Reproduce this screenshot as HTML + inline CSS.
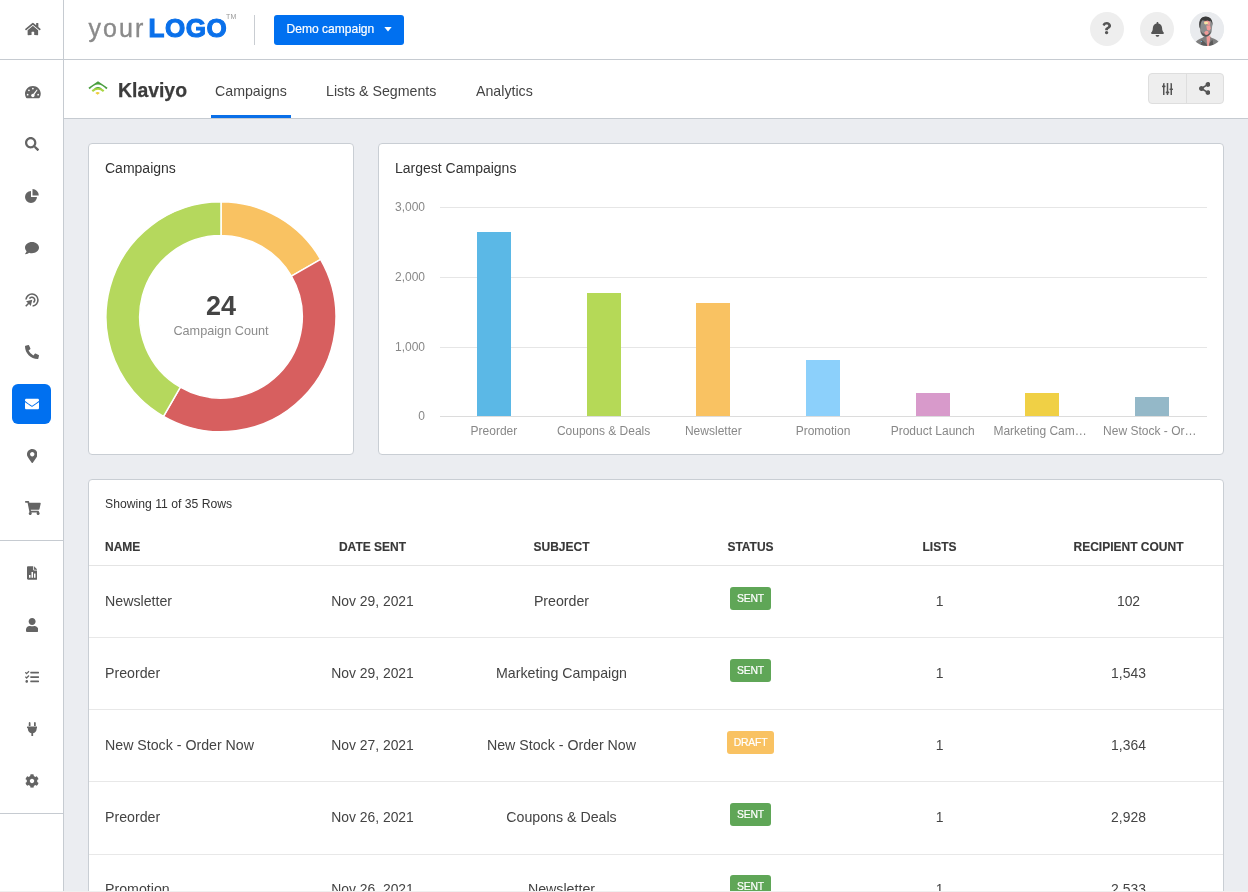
<!DOCTYPE html>
<html>
<head>
<meta charset="utf-8">
<title>Klaviyo Campaigns</title>
<style>
*{box-sizing:border-box;margin:0;padding:0}
html,body{width:1248px;height:892px;overflow:hidden}
body{font-family:"Liberation Sans",sans-serif;background:#ebedf1;color:#444;position:relative}
.abs{position:absolute}
/* sidebar */
#side{position:absolute;left:0;top:0;width:64px;height:892px;background:#fff;border-right:1px solid #c6cbd1}
#side .ic{position:absolute;left:0;width:63px;height:20px;display:flex;align-items:center;justify-content:center}
#side svg{fill:#555;display:block}
#side .hr{position:absolute;left:0;width:63px;height:1px;background:#c6cbd1}
#side .act{position:absolute;left:12px;top:384px;width:39px;height:40px;border-radius:6px;background:#0070f0}
/* top bar */
#top{position:absolute;left:64px;top:0;width:1184px;height:60px;background:#fff;border-bottom:1px solid #c6cbd1}
#sub{position:absolute;left:64px;top:60px;width:1184px;height:59px;background:#fff;border-bottom:1px solid #c6cbd1}
.card{position:absolute;background:#fff;border:1px solid #c9ced4;border-radius:4px}
.ttl{position:absolute;left:16px;top:16.200px;font-size:14px;color:#333;line-height:17px}

#c3 .show{position:absolute;left:16px;top:17px;font-size:12.200px;line-height:14px;color:#333}
#c3 .row{position:absolute;left:0;width:1134px;display:flex;align-items:center}
#c3 .row>div{width:189px;text-align:center;white-space:nowrap}
#c3 .row>div:first-child{text-align:left;padding-left:16px}
#c3 .hd{top:48px;height:38px;border-bottom:1px solid #e4e4e4;font-size:12px;font-weight:bold;color:#383838;-webkit-text-stroke:.15px #383838}
#c3 .r{height:72px;border-bottom:1px solid #e8e8e8;font-size:14.200px;color:#444;padding-bottom:1px}
#c3 .r>div:nth-child(2),#c3 .r>div:nth-child(5),#c3 .r>div:nth-child(6){font-size:13.900px}
.bdg{display:inline-block;height:23px;line-height:23.500px;width:41px;border-radius:3px;font-size:10.400px;letter-spacing:-.2px;color:#fff;position:relative;top:-2.500px;vertical-align:middle;-webkit-text-stroke:.2px #fff;text-align:center}
.draft{width:47px}
.sent{background:#5fa657}
.draft{background:#f9c262}
</style>
</head>
<body>
<div id="wrap" style="position:absolute;left:0;top:0;width:1248px;height:892px;will-change:transform">
<!--SIDEBAR-->
<div id="side">
<svg class="abs" style="left:25.00px;top:21.60px;fill:#646464" width="15.75" height="14" viewBox="0 0 576 512"><path d="M280.37 148.26L96 300.11V464a16 16 0 0 0 16 16l112.06-.29a16 16 0 0 0 15.92-16V368a16 16 0 0 1 16-16h64a16 16 0 0 1 16 16v95.640a16 16 0 0 0 16 16.050L464 480a16 16 0 0 0 16-16V300L295.67 148.26a12.190 12.190 0 0 0-15.300 0zM571.600 251.470L488 182.560V44.050a12 12 0 0 0-12-12h-56a12 12 0 0 0-12 12v72.610L318.470 43a48 48 0 0 0-61 0L4.340 251.470a12 12 0 0 0-1.600 16.900l25.500 31A12 12 0 0 0 45.150 301l235.220-193.740a12.190 12.190 0 0 1 15.300 0L530.900 301a12 12 0 0 0 16.900-1.600l25.500-31a12 12 0 0 0-1.700-16.930z"/></svg>
<div class="hr" style="top:59px"></div>
<svg class="abs" style="left:25.00px;top:84.60px;fill:#646464" width="15.75" height="14" viewBox="0 0 576 512"><path d="M288 32C128.940 32 0 160.940 0 320c0 52.800 14.250 102.260 39.060 144.800 5.610 9.620 16.300 15.200 27.440 15.200h443c11.140 0 21.830-5.580 27.440-15.200C561.750 422.260 576 372.800 576 320c0-159.060-128.940-288-288-288z"/><g fill="#fff"><circle cx="288" cy="128" r="32"/><circle cx="144" cy="192" r="32"/><circle cx="96" cy="352" r="32"/><circle cx="480" cy="352" r="32"/><circle cx="288" cy="384" r="62"/><path d="M268 366L426 172a18 18 0 0 1 28 21L310 400z"/></g></svg>
<svg class="abs" style="left:25.00px;top:136.60px;fill:#646464" width="14.00" height="14" viewBox="0 0 512 512"><path d="M505 442.700L405.300 343c-4.500-4.500-10.600-7-17-7H372c27.600-35.300 44-79.700 44-128C416 93.100 322.900 0 208 0S0 93.100 0 208s93.100 208 208 208c48.300 0 92.700-16.400 128-44v16.300c0 6.400 2.500 12.500 7 17l99.700 99.700c9.400 9.400 24.600 9.400 33.900 0l28.300-28.300c9.400-9.400 9.400-24.600.1-34zM208 336c-70.700 0-128-57.200-128-128 0-70.700 57.200-128 128-128 70.700 0 128 57.200 128 128 0 70.700-57.200 128-128 128z"/></svg>
<svg class="abs" style="left:25.00px;top:188.60px;fill:#646464" width="14.00" height="14" viewBox="0 0 512 512"><path d="M219 73A219 219 0 1 0 438 292L219 292z"/><path d="M274 4A230 230 0 0 1 504 234L274 234z"/></svg>
<svg class="abs" style="left:25.00px;top:240.60px;fill:#646464" width="14.00" height="14" viewBox="0 0 512 512"><path d="M256 32C114.600 32 0 125.100 0 240c0 49.600 21.400 95 57 130.700C44.500 421.100 2.700 466 2.200 466.500c-2.200 2.300-2.800 5.700-1.500 8.700S4.800 480 8 480c66.300 0 116-31.800 140.600-51.400 32.700 12.300 69 19.400 107.400 19.400 141.400 0 256-93.100 256-208S397.400 32 256 32z"/></svg>
<svg class="abs" style="left:25.22px;top:292.60px;fill:#646464" width="13.56" height="14" viewBox="0 0 13.56 14"><g fill="none" stroke="#646464" stroke-width="1.600"><path d="M1 6.500A6 6 0 1 1 7.600 13"/><path d="M4.500 5.700A2.800 2.800 0 1 1 8.400 9.450"/></g><path d="M7.300 6.800L1.100 8.300 2.900 10 0.200 12.700l1.100 1.100L4 11.100l1.800 1.800z"/></svg>
<svg class="abs" style="left:25.00px;top:344.60px;fill:#646464" width="14.00" height="14" viewBox="0 0 512 512"><path d="M497.390 361.800l-112-48a24 24 0 0 0-28 6.900l-49.600 60.600A370.660 370.660 0 0 1 130.600 204.110l60.600-49.600a23.940 23.940 0 0 0 6.900-28l-48-112A24.160 24.160 0 0 0 122.600.61l-104 24A24 24 0 0 0 0 48c0 256.500 207.900 464 464 464a24 24 0 0 0 23.400-18.600l24-104a24.290 24.290 0 0 0-14.010-27.600z"/></svg>
<div class="act"></div>
<svg class="abs" style="left:25.00px;top:396.60px;fill:#fff" width="14.00" height="14" viewBox="0 0 512 512"><path d="M502.300 190.800c3.900-3.100 9.700-.2 9.700 4.700V400c0 26.500-21.500 48-48 48H48c-26.500 0-48-21.500-48-48V195.600c0-5 5.700-7.800 9.700-4.700 22.400 17.400 52.100 39.500 154.100 113.600 21.100 15.400 56.700 47.800 92.200 47.600 35.700.3 72-32.800 92.300-47.600 102-74.100 131.600-96.300 154-113.700zM256 320c23.200.4 56.600-29.200 73.400-41.400 132.700-96.300 142.800-104.700 173.400-128.700 5.800-4.500 9.200-11.500 9.200-18.900v-19c0-26.500-21.500-48-48-48H48C21.500 64 0 85.500 0 112v19c0 7.400 3.400 14.300 9.200 18.900 30.600 23.900 40.700 32.400 173.400 128.700 16.800 12.200 50.200 41.800 73.400 41.400z"/></svg>
<svg class="abs" style="left:26.75px;top:448.60px;fill:#646464" width="10.50" height="14" viewBox="0 0 384 512"><path d="M172.268 501.670C26.970 291.031 0 269.413 0 192 0 85.961 85.961 0 192 0s192 85.961 192 192c0 77.413-26.970 99.031-172.268 309.670-9.535 13.774-29.930 13.773-39.464 0zM192 272c44.183 0 80-35.817 80-80s-35.817-80-80-80-80 35.817-80 80 35.817 80 80 80z"/></svg>
<svg class="abs" style="left:25.00px;top:500.60px;fill:#646464" width="15.75" height="14" viewBox="0 0 576 512"><path d="M528.120 301.319l47.273-208C578.806 78.301 567.391 64 551.990 64H159.208l-9.166-44.810C147.758 8.021 137.930 0 126.529 0H24C10.745 0 0 10.745 0 24v16c0 13.255 10.745 24 24 24h69.883l70.248 343.435C147.325 417.100 136 435.222 136 456c0 30.928 25.072 56 56 56s56-25.072 56-56c0-15.674-6.447-29.835-16.824-40h209.647C430.447 426.165 424 440.326 424 456c0 30.928 25.072 56 56 56s56-25.072 56-56c0-22.172-12.888-41.332-31.579-50.405l5.517-24.276c3.413-15.018-8.002-29.319-23.403-29.319H218.117l-6.545-32h293.145c11.206 0 20.920-7.754 23.403-18.681z"/></svg>
<div class="hr" style="top:540px"></div>
<svg class="abs" style="left:26.75px;top:565.60px;fill:#646464" width="10.50" height="14" viewBox="0 0 11 14"><path fill-rule="evenodd" d="M1.200 0h5.300v3.600c0 .5.400.9.900.9h3.600v8.300c0 .7-.5 1.200-1.200 1.200H1.200C.5 14 0 13.500 0 12.800V1.200C0 .5.500 0 1.200 0zM7.400 0l3.600 3.600H7.400zM2.100 9h1.600v3H2.100zM4.700 6h1.600v6H4.700zM7.300 7.600h1.600V12H7.300z"/></svg>
<svg class="abs" style="left:25.88px;top:617.60px;fill:#646464" width="12.25" height="14" viewBox="0 0 448 512"><path d="M224 256c70.700 0 128-57.300 128-128S294.700 0 224 0 96 57.300 96 128s57.300 128 128 128zm89.600 32h-16.700c-22.200 10.200-46.900 16-72.900 16s-50.600-5.800-72.900-16h-16.700C60.200 288 0 348.200 0 422.400V464c0 26.500 21.500 48 48 48h352c26.500 0 48-21.500 48-48v-41.600c0-74.200-60.200-134.400-134.400-134.400z"/></svg>
<svg class="abs" style="left:25.00px;top:669.60px;fill:#646464" width="14.00" height="14" viewBox="0 0 512 512"><path d="M139.610 35.500a12 12 0 0 0-17 0L58.930 98.810l-22.700-22.120a12 12 0 0 0-17 0L3.530 92.410a12 12 0 0 0 0 17l47.590 47.400a12.780 12.780 0 0 0 17.610 0l15.590-15.620L156.520 69a12.090 12.090 0 0 0 .09-17zm0 159.190a12 12 0 0 0-17 0l-63.680 63.720-22.700-22.100a12 12 0 0 0-17 0L3.530 252a12 12 0 0 0 0 17L51 316.500a12.770 12.770 0 0 0 17.600 0l15.700-15.690 72.200-72.220a12 12 0 0 0 .09-16.900zM64 368c-26.490 0-48.590 21.500-48.590 48S37.530 464 64 464a48 48 0 0 0 0-96zm432 16H208a16 16 0 0 0-16 16v32a16 16 0 0 0 16 16h288a16 16 0 0 0 16-16v-32a16 16 0 0 0-16-16zm0-320H208a16 16 0 0 0-16 16v32a16 16 0 0 0 16 16h288a16 16 0 0 0 16-16V80a16 16 0 0 0-16-16zm0 160H208a16 16 0 0 0-16 16v32a16 16 0 0 0 16 16h288a16 16 0 0 0 16-16v-32a16 16 0 0 0-16-16z"/></svg>
<svg class="abs" style="left:26.75px;top:721.60px;fill:#646464" width="10.50" height="14" viewBox="0 0 384 512"><path d="M256 144V32c0-17.673 14.327-32 32-32s32 14.327 32 32v112h-64zm112 16H16c-8.837 0-16 7.163-16 16v32c0 8.837 7.163 16 16 16h16v32c0 77.406 54.969 141.971 128 156.796V512h64v-99.204c73.031-14.825 128-79.390 128-156.796v-32h16c8.837 0 16-7.163 16-16v-32c0-8.837-7.163-16-16-16zm-240-16V32c0-17.673-14.327-32-32-32S64 14.327 64 32v112h64z"/></svg>
<svg class="abs" style="left:25.00px;top:773.60px;fill:#646464" width="14.00" height="14" viewBox="0 0 512 512"><path d="M487.400 315.700l-42.600-24.600c4.300-23.200 4.300-47 0-70.200l42.600-24.600c4.900-2.800 7.100-8.600 5.500-14-11.100-35.600-30-67.800-54.700-94.600-3.800-4.100-10-5.100-14.800-2.300L380.800 110c-17.900-15.400-38.500-27.300-60.800-35.100V25.800c0-5.600-3.900-10.500-9.400-11.700-36.700-8.200-74.300-7.800-109.200 0-5.500 1.200-9.400 6.100-9.400 11.700V75c-22.200 7.900-42.800 19.800-60.800 35.100L88.700 85.500c-4.900-2.800-11-1.900-14.800 2.300-24.700 26.700-43.600 58.900-54.700 94.600-1.700 5.400.6 11.200 5.500 14L67.300 221c-4.300 23.200-4.300 47 0 70.200l-42.600 24.600c-4.900 2.800-7.100 8.600-5.500 14 11.100 35.600 30 67.800 54.700 94.600 3.800 4.100 10 5.100 14.800 2.300l42.600-24.600c17.900 15.400 38.500 27.300 60.800 35.100v49.200c0 5.600 3.900 10.500 9.400 11.700 36.700 8.200 74.300 7.800 109.200 0 5.500-1.200 9.400-6.100 9.400-11.700v-49.200c22.200-7.900 42.800-19.800 60.800-35.100l42.600 24.600c4.900 2.800 11 1.900 14.800-2.300 24.700-26.700 43.600-58.900 54.700-94.600 1.500-5.500-.7-11.300-5.600-14.100zM256 336c-44.100 0-80-35.900-80-80s35.900-80 80-80 80 35.900 80 80-35.900 80-80 80z"/></svg>
<div class="hr" style="top:813px"></div>
</div>
<!--TOP-->
<div id="top">
<div class="abs" id="lg1" style="left:24.400px;top:12.900px;font-size:25px;line-height:30px;color:#8a8a8a;letter-spacing:2.100px;-webkit-text-stroke:.35px #8a8a8a;white-space:nowrap">your</div>
<div class="abs" id="lg2" style="left:84.500px;top:12.600px;font-size:26px;line-height:30px;font-weight:bold;color:#0a70ea;-webkit-text-stroke:1.1px #0a70ea;letter-spacing:.55px;white-space:nowrap">LOGO</div>
<div class="abs" id="tm" style="left:162px;top:13px;font-size:7px;line-height:8px;color:#999;letter-spacing:.3px">TM</div>
<div class="abs" style="left:190px;top:15px;width:1px;height:30px;background:#c9cdd2"></div>
<div class="abs" id="btn" style="left:210px;top:15px;width:130px;height:30px;border-radius:3px;background:#0070f0;color:#fff;font-size:12.050px;line-height:29.500px;padding-left:12.500px;-webkit-text-stroke:.2px #fff;white-space:nowrap">Demo campaign<svg class="abs" style="left:110.200px;top:12px" width="8" height="5" viewBox="0 0 8 5"><path d="M0.3 0h7.4L4 4.6z" fill="#fff"/></svg></div>
<div class="abs" style="left:1026px;top:12px;width:34px;height:34px;border-radius:17px;background:#eee"><svg class="abs" style="left:12.300px;top:10.300px" width="9.200" height="12.300" viewBox="0 0 384 512"><path fill="#555" d="M202.021 0C122.202 0 70.503 32.703 29.914 91.026c-7.363 10.580-5.093 25.086 5.178 32.874l43.138 32.709c10.373 7.865 25.132 6.026 33.253-4.148 25.049-31.381 43.630-49.449 82.757-49.449 30.764 0 68.816 19.799 68.816 49.631 0 22.552-18.617 34.134-48.993 51.164-35.423 19.860-82.299 44.576-82.299 106.405V320c0 13.255 10.745 24 24 24h72.471c13.255 0 24-10.745 24-24v-5.773c0-42.860 125.268-44.645 125.268-160.627C377.504 66.256 286.902 0 202.021 0zM192 373.459c-38.196 0-69.271 31.075-69.271 69.271 0 38.195 31.075 69.270 69.271 69.270s69.271-31.075 69.271-69.271-31.075-69.270-69.271-69.270z"/></svg></div>
<div class="abs" style="left:1076px;top:12px;width:34px;height:34px;border-radius:17px;background:#eee"><svg class="abs" style="left:10.850px;top:10.100px" width="12.950" height="14.800" viewBox="0 0 448 512"><path fill="#555" d="M224 512c35.320 0 63.970-28.650 63.970-64H160.030c0 35.350 28.650 64 63.970 64zm215.390-149.710c-19.320-20.760-55.470-51.990-55.470-154.290 0-77.700-54.480-139.900-127.940-155.160V32c0-17.670-14.320-32-31.980-32s-31.980 14.330-31.980 32v20.840C118.560 68.100 64.080 130.300 64.080 208c0 102.300-36.150 133.530-55.470 154.290-6 6.450-8.660 14.160-8.610 21.710.11 16.400 12.980 32 32.100 32h383.800c19.120 0 32-15.600 32.100-32 .05-7.550-2.610-15.270-8.610-21.710z"/></svg></div>
<div class="abs" id="av" style="left:1126px;top:12px;width:34px;height:34px;border-radius:17px;background:#e9ebee;overflow:hidden">
<svg width="34" height="34" viewBox="0 0 34 34"><defs><filter id="avb" x="-10%" y="-10%" width="120%" height="120%"><feGaussianBlur stdDeviation=".5"/></filter></defs><rect width="34" height="34" fill="#e9ebee"/><g filter="url(#avb)">
<path d="M3.500 34C4.500 29.500 8 27.500 12 26l3-2h4l3 2c4.500 1.500 8 3.500 9 8z" fill="#7e7e7e"/>
<path d="M11.500 27.500l4.500 4 1.500 2.500H11zM22.500 27.500l-3.500 4-1 2.500h5.500z" fill="#5a5a5a"/>
<path d="M16.400 23.500h4l-.3 4-1.300 6.500h-1.600l-.5-6z" fill="#ee9a97"/>
<path d="M9.700 13C9.200 7.500 11.600 4.700 15.700 4.700S22.600 7.500 22.300 13l-.6 6c-.5 3.200-2.900 5.700-6 5.700s-5-2.500-5.500-5.700z" fill="#8b8d8e"/>
<path d="M9.400 15C8.500 8 11.100 4.400 15.700 4.400S23.200 8 22.400 14c-.3-2.500-.7-4.300-1.800-5.300-1.800.5-5.500.5-8.200-.4-1.500 1.200-2 3.800-2.200 8.700z" fill="#3a3a3a"/>
<path d="M10.700 18.500c.5 3.600 2.300 6.200 5 6.200s4.800-2.300 5.500-5.900c-1 2.300-2.500 3.100-5.300 3.100s-4.200-.9-5.200-3.400z" fill="#575757"/>
<path d="M14.200 9.300l3.800-.7 2.300 2-.2 2.200-2 .3-1.800-1.300-2.200.2z" fill="#f09a98"/>
<path d="M16.300 13.500l3.800-.3.600 3.300-1.300 2.300-2.300-.8-.5-2.200z" fill="#f09a98"/>
<path d="M15.800 18.700l2.200.4.800 2.500-1.800 1.300-2.200-.5-.2-2.200z" fill="#f09a98"/>
<path d="M13.900 10.400l2.300-.9 2.200.9-.9 1.700-2.500.3z" fill="#f1e6a4"/>
<rect x="10.900" y="29" width="1" height="1" fill="#7cc4ee"/></g></svg></div>

</div>
<div id="sub">
<svg class="abs" id="klogo" style="left:24.400px;top:21.300px" width="20" height="14" viewBox="0 0 20 14"><path d="M10 0.300L19.600 6.800l-1.300 1.400Q10 -1.300 1.700 8.200L0.400 6.800z" fill="#4a9e3f"/><path d="M3.600 9.300Q10 3.900 16.400 9.300L15 10.900Q10 6.600 5 10.900z" fill="#a8d641"/><path d="M5.600 7.700Q10 4.500 14.400 7.700Q10 6.500 5.600 7.700z" fill="#4a9e3f"/><path d="M7.300 11.900Q9.600 10.100 11.900 11.900L9.600 13.700z" fill="#efcd3a"/></svg>
<div class="abs" id="kl" style="left:54px;top:17.400px;font-size:19.400px;line-height:26px;font-weight:bold;color:#3c3c3c;white-space:nowrap;-webkit-text-stroke:.25px #3c3c3c">Klaviyo</div>
<div class="abs tab" id="t1" style="left:151px;top:22px;font-size:14.200px;line-height:18px;color:#444;white-space:nowrap">Campaigns</div>
<div class="abs" style="left:147px;top:55px;width:80px;height:3px;background:#0a6fe8"></div>
<div class="abs tab" id="t2" style="left:262px;top:22px;font-size:14.200px;line-height:18px;color:#444;white-space:nowrap">Lists &amp; Segments</div>
<div class="abs tab" id="t3" style="left:412px;top:22px;font-size:14.200px;line-height:18px;color:#444;white-space:nowrap">Analytics</div>
<div class="abs" id="bg" style="left:1084px;top:13px;width:76px;height:31px;border-radius:4px;background:#eee;border:1px solid #dedede">
<div class="abs" style="left:37px;top:0;width:1px;height:29px;background:#dedede"></div>
<svg class="abs" style="left:12.700px;top:8.600px" width="11" height="12.400" viewBox="0 0 11 12.400"><g fill="#555"><rect x="1" y="0" width="1.500" height="12.400" rx=".5"/><rect x="4.750" y="0" width="1.500" height="12.400" rx=".5"/><rect x="8.500" y="0" width="1.500" height="12.400" rx=".5"/><rect x="0" y="2.500" width="3.500" height="1.700" rx=".6"/><rect x="3.750" y="8.600" width="3.500" height="1.700" rx=".6"/><rect x="7.500" y="5.400" width="3.500" height="1.700" rx=".6"/></g></svg>
<svg class="abs" style="left:50px;top:8px" width="11.400" height="13" viewBox="0 0 448 512"><path fill="#555" d="M352 320c-22.608 0-43.387 7.819-59.790 20.895l-102.486-64.054a96.551 96.551 0 0 0 0-41.683l102.486-64.054C308.613 184.181 329.392 192 352 192c53.019 0 96-42.981 96-96S405.019 0 352 0s-96 42.981-96 96c0 7.158.79 14.130 2.276 20.841L155.790 180.895C139.387 167.819 118.608 160 96 160c-53.019 0-96 42.981-96 96s42.981 96 96 96c22.608 0 43.387-7.819 59.790-20.895l102.486 64.054A96.301 96.301 0 0 0 256 416c0 53.019 42.981 96 96 96s96-42.981 96-96-42.981-96-96-96z"/></svg>
</div>

</div>
<!--CARDS-->
<div class="card" id="c1" style="left:88px;top:143px;width:266px;height:312px">
<div class="ttl">Campaigns</div>
<svg class="abs" id="donut" style="left:0;top:0" width="264" height="310" viewBox="0 0 264 310"><path d="M132.00 57.80A115.0 115.0 0 0 1 231.59 115.30L202.41 132.15A81.3 81.3 0 0 0 132.00 91.50Z" fill="#f9c262" stroke="#fff" stroke-width="1.5" stroke-linejoin="round"/><path d="M231.59 115.30A115.0 115.0 0 0 1 74.50 272.39L91.35 243.21A81.3 81.3 0 0 0 202.41 132.15Z" fill="#d75f5f" stroke="#fff" stroke-width="1.5" stroke-linejoin="round"/><path d="M74.50 272.39A115.0 115.0 0 0 1 132.00 57.80L132.00 91.50A81.3 81.3 0 0 0 91.35 243.21Z" fill="#b5d85d" stroke="#fff" stroke-width="1.5" stroke-linejoin="round"/></svg>
<div class="abs" id="dn" style="left:0;top:145.500px;width:264px;text-align:center;font-size:27px;line-height:32px;font-weight:bold;color:#444">24</div>
<div class="abs" id="dl" style="left:0;top:178.600px;width:264px;text-align:center;font-size:12.700px;line-height:16px;color:#8c8c8c">Campaign Count</div>

</div>
<div class="card" id="c2" style="left:378px;top:143px;width:846px;height:312px">
<div class="ttl">Largest Campaigns</div>
<svg class="abs" style="left:0;top:0" width="844" height="310" viewBox="0 0 844 310"><rect x="61" y="63" width="767" height="1" fill="#e6e6e6"/><rect x="61" y="133" width="767" height="1" fill="#e6e6e6"/><rect x="61" y="203" width="767" height="1" fill="#e6e6e6"/><rect x="61" y="272" width="767" height="1" fill="#dcdcdc"/><rect x="98" y="88" width="34" height="184" fill="#5bb8e6"/><rect x="208" y="149" width="34" height="123" fill="#b5d957"/><rect x="317" y="159" width="34" height="113" fill="#f9c262"/><rect x="427" y="216" width="34" height="56" fill="#8cd0fb"/><rect x="537" y="249" width="34" height="23" fill="#d89acb"/><rect x="646" y="249" width="34" height="23" fill="#f0d045"/><rect x="756" y="253" width="34" height="19" fill="#94b8c8"/></svg>
<div class="abs yl" style="left:0;top:55.5px;width:46px;text-align:right;font-size:12px;line-height:14px;color:#888">3,000</div>
<div class="abs yl" style="left:0;top:125.5px;width:46px;text-align:right;font-size:12px;line-height:14px;color:#888">2,000</div>
<div class="abs yl" style="left:0;top:195.5px;width:46px;text-align:right;font-size:12px;line-height:14px;color:#888">1,000</div>
<div class="abs yl" style="left:0;top:264.5px;width:46px;text-align:right;font-size:12px;line-height:14px;color:#888">0</div>
<div class="abs xl" style="left:59.9px;top:280px;width:110px;text-align:center;font-size:12px;line-height:14px;color:#888;white-space:nowrap">Preorder</div>
<div class="abs xl" style="left:169.6px;top:280px;width:110px;text-align:center;font-size:12px;line-height:14px;color:#888;white-space:nowrap">Coupons &amp; Deals</div>
<div class="abs xl" style="left:279.3px;top:280px;width:110px;text-align:center;font-size:12px;line-height:14px;color:#888;white-space:nowrap">Newsletter</div>
<div class="abs xl" style="left:389.0px;top:280px;width:110px;text-align:center;font-size:12px;line-height:14px;color:#888;white-space:nowrap">Promotion</div>
<div class="abs xl" style="left:498.7px;top:280px;width:110px;text-align:center;font-size:12px;line-height:14px;color:#888;white-space:nowrap">Product Launch</div>
<div class="abs xl" style="left:606.1px;top:280px;width:110px;text-align:center;font-size:12px;line-height:14px;color:#888;white-space:nowrap">Marketing Cam…</div>
<div class="abs xl" style="left:715.8px;top:280px;width:110px;text-align:center;font-size:12px;line-height:14px;color:#888;white-space:nowrap">New Stock - Or…</div>

</div>
<div class="card" id="c3" style="left:88px;top:479px;width:1136px;height:430px;border-bottom-left-radius:0;border-bottom-right-radius:0">
<div class="show">Showing 11 of 35 Rows</div>
<div class="row hd"><div>NAME</div><div>DATE SENT</div><div>SUBJECT</div><div>STATUS</div><div>LISTS</div><div>RECIPIENT COUNT</div></div>
<div class="row r" style="top:86px"><div>Newsletter</div><div>Nov 29, 2021</div><div>Preorder</div><div><span class="bdg sent">SENT</span></div><div>1</div><div>102</div></div>
<div class="row r" style="top:158px"><div>Preorder</div><div>Nov 29, 2021</div><div>Marketing Campaign</div><div><span class="bdg sent">SENT</span></div><div>1</div><div>1,543</div></div>
<div class="row r" style="top:230px"><div>New Stock - Order Now</div><div>Nov 27, 2021</div><div>New Stock - Order Now</div><div><span class="bdg draft">DRAFT</span></div><div>1</div><div>1,364</div></div>
<div class="row r" style="top:302px;height:73px;padding-bottom:2px"><div>Preorder</div><div>Nov 26, 2021</div><div>Coupons &amp; Deals</div><div><span class="bdg sent">SENT</span></div><div>1</div><div>2,928</div></div>
<div class="row r" style="top:375px;padding-bottom:3px"><div>Promotion</div><div>Nov 26, 2021</div><div>Newsletter</div><div><span class="bdg sent">SENT</span></div><div>1</div><div>2,533</div></div>

</div>
<div class="abs" style="left:0;top:891px;width:1248px;height:1px;background:#f0f0f0;z-index:9"></div>
</div>
</body>
</html>
